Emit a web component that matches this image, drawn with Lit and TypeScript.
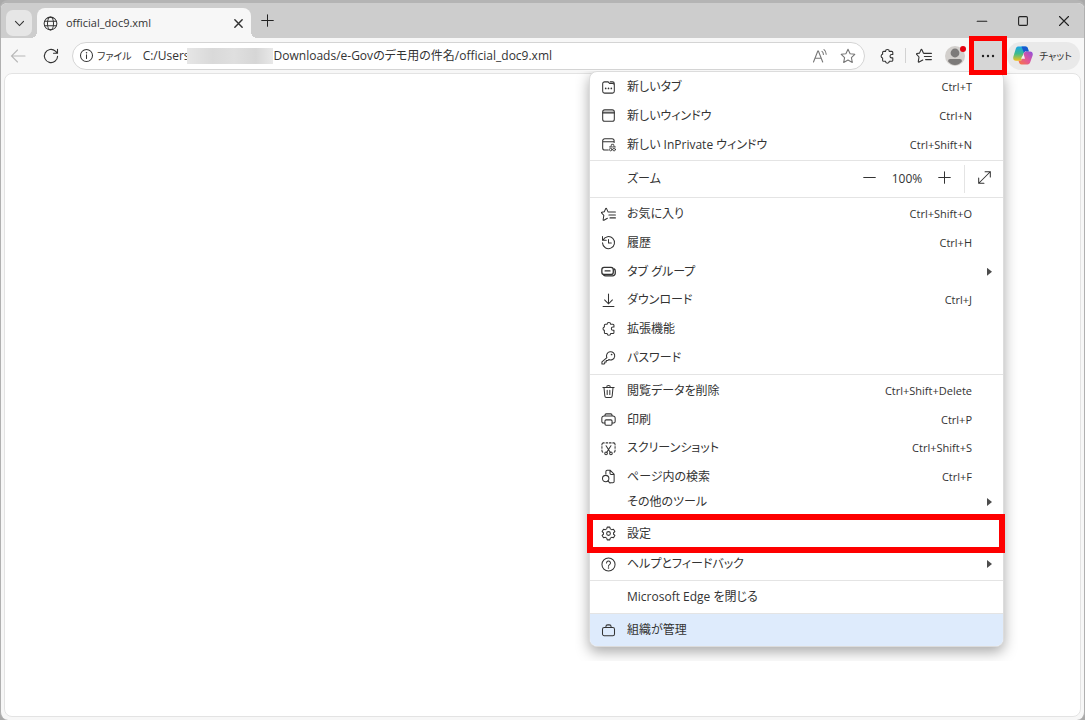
import { LitElement, html, css, svg, nothing, TemplateResult } from "lit";
import { customElement, property } from "lit/decorators.js";
import { classMap } from "lit/directives/class-map.js";

const ICONS: Record<string, TemplateResult> = {
  chevron: svg`<path d="M3 5.5 8 10.5 13 5.5" stroke-width="1.4"/>`,
  globe: svg`<circle cx="8" cy="8" r="6.8"/><ellipse cx="8" cy="8" rx="3.2" ry="6.8"/><path d="M1.8 5.6h12.4M1.8 10.4h12.4"/>`,
  close: svg`<path d="M3.5 3.5l9 9M12.5 3.5l-9 9"/>`,
  closetab: svg`<path d="M3.500 3.500l9 9M12.500 3.500l-9 9" stroke-width="1.800"/>`,
  plus: svg`<path d="M8 1.8v12.4M1.8 8h12.4"/>`,
  minus: svg`<path d="M1.8 8h12.4"/>`,
  min: svg`<path d="M3.2 8.2h9.6"/>`,
  max: svg`<rect x="3.6" y="3.6" width="8.8" height="8.8" rx="1.2"/>`,
  back: svg`<path d="M15 8H1.5M7.5 2 1.5 8l6 6"/>`,
  reload: svg`<path d="M14.6 8.2A6.6 6.6 0 1 1 12.4 3.1L14.3 5M14.5 1.2V5.2H10.5"/>`,
  info: svg`<circle cx="8" cy="8" r="6.4"/><path d="M8 7.2v4"/><circle cx="8" cy="5" r=".8" class="solid"/>`,
  aloud: svg`<path d="M1.5 14 5.8 3h.6l4.3 11M3.2 10.2h5.8M10 3.4c1 .8 1.4 1.8 1.4 3M12 1.6c1.6 1.2 2.2 2.8 2.2 4.6"/>`,
  star: svg`<path d="M8 1.3 10.1 5.7 14.8 6.3 11.4 9.6 12.3 14.4 8 12.1 3.7 14.4 4.6 9.6 1.2 6.3 5.9 5.7Z" stroke-linejoin="round"/>`,
  favorites: svg`<path d="M8.600 5.400 7.500 5.200 5.900 1.700a.5.5 0 0 0-.9 0L3.500 5.100.9 5.500a.5.5 0 0 0-.2.9L3 9 2.300 13.600a.5.5 0 0 0 .8.5L6.800 12M8.600 5.400h6.800M8.400 8.500h7M9.600 11.600h5.800" stroke-linejoin="round"/>`,
  puzzle: svg`<path d="M4.700 3.400H6.500a1.900 1.900 0 0 1 3.800 0h2.400a1.100 1.100 0 0 1 1.100 1.100v2h-1.100a1.700 1.700 0 0 0 0 3.400h1.100v2.300a1.100 1.100 0 0 1-1.100 1.100H10.300a1.900 1.900 0 0 1-3.800 0H4.700a1.100 1.100 0 0 1-1.100-1.100V10a1.900 1.900 0 0 1 0-3.700V4.500a1.100 1.100 0 0 1 1.100-1.100Z" stroke-linejoin="round"/>`,
  dots: svg`<g class="solid"><circle cx="3" cy="8" r="1.2"/><circle cx="8" cy="8" r="1.2"/><circle cx="13" cy="8" r="1.2"/></g>`,
  newtab: svg`<path d="M1.8 4a2 2 0 0 1 2-2h3.8l1.6 1.8h3a2 2 0 0 1 2 2V12a2 2 0 0 1-2 2H3.8a2 2 0 0 1-2-2ZM9.8 2h2.4a2 2 0 0 1 2 2v1.5"/><g class="solid"><circle cx="5" cy="9" r=".9"/><circle cx="8" cy="9" r=".9"/><circle cx="11" cy="9" r=".9"/></g>`,
  window: svg`<path d="M2 5V4a2 2 0 0 1 2-2h8a2 2 0 0 1 2 2v1Z" fill="#c4c4c4" stroke="none"/><rect x="1.8" y="1.800" width="12.4" height="12.4" rx="2.2"/><path d="M1.8 5.200h12.4"/>`,
  inprivate: svg`<path d="M7.800 13.800H4a2.200 2.200 0 0 1-2.200-2.200V4A2.200 2.200 0 0 1 4 1.800h7.800A2.200 2.200 0 0 1 14 4v1.800M1.800 5h12.200"/><path d="M9 10.600h6.400M10.600 10.200l.6-2.400h2.200l.6 2.400" stroke-width=".9"/><circle cx="10.400" cy="13.400" r="1.400" stroke-width=".9"/><circle cx="14" cy="13.400" r="1.400" stroke-width=".9"/>`,
  history: svg`<path d="M2.2 5.4A6.4 6.4 0 1 1 1.6 8.4M1.6 1.6v4h4M8 4.8v3.8h3"/>`,
  groups: svg`<rect x=".9" y="3.6" width="12.2" height="7.6" rx="2.4" stroke-width="1.400"/><path d="M4.4 7.4h5.2M14 5.2a2.6 2.6 0 0 1 1.2 2.2v2.4a2.8 2.8 0 0 1-2.8 2.8H5a3 3 0 0 1-2.2-.9" stroke-width="1.400"/>`,
  download: svg`<path d="M8 1v10.4M3.8 7.4 8 11.6l4.2-4.2M2.2 14.4h11.6"/>`,
  key: svg`<path d="M6.3 8.2a4.4 4.4 0 1 1 2 2L7.2 11.3H5.6v1.6H4v1.4l-.8.7H1v-2.4Z" stroke-linejoin="round"/><circle cx="11.3" cy="4.8" r=".9" class="solid"/>`,
  trash: svg`<path d="M2 3.8h12M6 3.6a2 2 0 0 1 4 0M3.2 4l.9 8.8a1.6 1.6 0 0 0 1.6 1.5h4.6a1.6 1.6 0 0 0 1.6-1.5L12.800 4M6.6 6.8v4.400M9.400 6.8v4.400"/>`,
  print: svg`<path d="M4.200 4.200V3.400A1.400 1.400 0 0 1 5.600 2h4.800a1.400 1.400 0 0 1 1.400 1.400v.8M4.200 11.800H2.600A1.700 1.700 0 0 1 .9 10.100V6.600a2.300 2.300 0 0 1 2.300-2.300h9.600a2.300 2.300 0 0 1 2.300 2.300v3.500a1.700 1.700 0 0 1-1.700 1.700H11.800"/><rect x="4.200" y="8.400" width="7.600" height="5.800" rx="1.300"/>`,
  shot: svg`<path d="M1 4.200V3.600A1.600 1.600 0 0 1 2.600 2h.8M5.400 2h1.800M9 2h1.800M12.600 2h.8A1.600 1.600 0 0 1 15 3.600v.6M15 6v1.800M15 9.600v.8a1.600 1.600 0 0 1-1 1.500M1 6v1.800M1 9.600v.8a1.600 1.600 0 0 0 1 1.500M5.400 5 10 12.200M10.600 5 6 12.200"/><circle cx="5.400" cy="13.200" r="1.400"/><circle cx="10.600" cy="13.200" r="1.400"/>`,
  find: svg`<path d="M5.200 5.200V2.800a1.400 1.400 0 0 1 1.400-1.400H9.800L14 5.600v7.600a1.400 1.400 0 0 1-1.400 1.400H10M9.600 1.600v3a1.200 1.200 0 0 0 1.200 1.200h3"/><circle cx="5" cy="10.200" r="3.400"/><path d="M7.400 12.600 9.600 15"/>`,
  gear: svg`<path d="M6.600 1.200h2.800l.5 1.900 1.500.8 1.900-.5 1.500 2.500-1.400 1.300v1.600l1.400 1.300-1.500 2.500-1.900-.5-1.500.8-.5 1.900H6.600l-.5-1.900-1.500-.8-1.900.5L1.200 10.100l1.400-1.300V7.200L1.200 5.900 2.700 3.400l1.900.5 1.500-.8Z" stroke-linejoin="round"/><circle cx="8" cy="8" r="2"/>`,
  help: svg`<circle cx="8" cy="8" r="7"/><path d="M5.900 6.300a2.100 2.100 0 1 1 3.200 1.800C8.300 8.600 8 9 8 9.800"/><circle cx="8" cy="11.800" r=".8" class="solid"/>`,
  bag: svg`<rect x="1.600" y="4.800" width="12.800" height="8.800" rx="1.800"/><path d="M5.200 4.600V4a2 2 0 0 1 2-2h1.600a2 2 0 0 1 2 2v.6"/>`,
  expand: svg`<path d="M2.400 13.600 13.600 2.400M8.600 1.800h5.600v5.600M1.800 8.600v5.600h5.600"/>`,
};

@customElement("ui-icon")
export class UiIcon extends LitElement {
  @property() name = "";
  @property({ type: Number }) size = 16;

  static styles = css`
    :host {
      display: inline-flex;
      flex: none;
    }
    svg {
      display: block;
      fill: none;
      stroke: currentColor;
      stroke-width: 1.1;
      stroke-linecap: round;
    }
    .solid {
      fill: currentColor;
      stroke: none;
    }
  `;

  render() {
    return html`<svg width=${this.size} height=${this.size} viewBox="0 0 16 16" aria-hidden="true">
      ${ICONS[this.name] ?? nothing}
    </svg>`;
  }
}

interface Item {
  label: string;
  icon?: string;
  keys?: string;
  sub?: boolean;
}

const WINDOWS: Item[] = [
  { label: "新しいタブ", icon: "newtab", keys: "Ctrl+T" },
  { label: "新しいウィンドウ", icon: "window", keys: "Ctrl+N" },
  { label: "新しい InPrivate ウィンドウ", icon: "inprivate", keys: "Ctrl+Shift+N" },
];

const LIBRARY: Item[] = [
  { label: "お気に入り", icon: "favorites", keys: "Ctrl+Shift+O" },
  { label: "履歴", icon: "history", keys: "Ctrl+H" },
  { label: "タブ グループ", icon: "groups", sub: true },
  { label: "ダウンロード", icon: "download", keys: "Ctrl+J" },
  { label: "拡張機能", icon: "puzzle" },
  { label: "パスワード", icon: "key" },
];

const TOOLS: Item[] = [
  { label: "閲覧データを削除", icon: "trash", keys: "Ctrl+Shift+Delete" },
  { label: "印刷", icon: "print", keys: "Ctrl+P" },
  { label: "スクリーンショット", icon: "shot", keys: "Ctrl+Shift+S" },
  { label: "ページ内の検索", icon: "find", keys: "Ctrl+F" },
];

@customElement("browser-menu")
export class BrowserMenu extends LitElement {
  static styles = css`
    :host {
      display: block;
      color: #333;
      background: #fff;
      border: 1px solid #dcdcdc;
      border-radius: 8px;
      box-sizing: border-box;
      box-shadow: 0 5px 14px rgba(0, 0, 0, 0.34);
      clip-path: inset(0 -14px -14px -14px);
    }
    button {
      font: inherit;
      font-feature-settings: inherit;
      color: inherit;
      background: none;
      border: 0;
      padding: 0;
      text-align: left;
    }
    .group {
      display: grid;
      grid-auto-rows: 1fr;
      padding: 1px 0;
      border-bottom: 1px solid #e4e4e4;
    }
    .windows {
      height: 86px;
    }
    .library {
      height: 172px;
      padding: 2px 0;
    }
    .tools {
      height: 114px;
      padding: 2px 0 0;
      border: 0;
    }
    .item {
      display: grid;
      grid-template-columns: 15px 1fr auto;
      column-gap: 11px;
      align-items: center;
      width: 100%;
      padding: 0 11px;
      white-space: nowrap;
    }
    .label {
      grid-column: 2;
    }
    .keys {
      margin-right: 20px;
      font-size: 11px;
    }
    .arrow {
      width: 5px;
      height: 8px;
      background: #4c4c4c;
      clip-path: polygon(0 0, 100% 50%, 0 100%);
    }
    .short {
      height: 22px;
    }
    .boxed {
      box-sizing: border-box;
      width: calc(100% + 5px);
      height: 39px;
      margin: 1px -2px 0 -3px;
      padding: 0 8px;
      border: 6px solid #fe0000;
    }
    .last {
      height: 32px;
    }
    .managed {
      height: 32px;
      background: #deebfc;
      border-radius: 0 0 7px 7px;
    }
    .rule {
      border-bottom: 1px solid #e4e4e4;
    }
    .help {
      padding-bottom: 5px;
    }
    .zoom {
      display: flex;
      align-items: center;
      height: 36px;
      padding: 0 11px 0 37px;
      border-bottom: 1px solid #e4e4e4;
    }
    .zoom .name {
      flex: 1;
    }
    .level {
      width: 60px;
      text-align: center;
    }
    .full {
      height: 28px;
      margin-left: 12px;
      padding-left: 12px;
      border-left: 1px solid #e4e4e4;
      display: flex;
      align-items: center;
    }
  `;

  private item(i: Item, extra = "") {
    return html`<button class=${classMap({ item: true, [extra || "plain"]: true })} role="menuitem">
      ${i.icon ? html`<ui-icon name=${i.icon} size="15"></ui-icon>` : nothing}
      <span class="label">${i.label}</span>
      ${i.keys ? html`<span class="keys">${i.keys}</span>` : nothing}
      ${i.sub ? html`<span class="arrow"></span>` : nothing}
    </button>`;
  }

  render() {
    return html`
      <div class="group windows">${WINDOWS.map((i) => this.item(i))}</div>
      <div class="zoom">
        <span class="name">ズーム</span>
        <button aria-label="縮小"><ui-icon name="minus" size="15"></ui-icon></button>
        <span class="level">100%</span>
        <button aria-label="拡大"><ui-icon name="plus" size="15"></ui-icon></button>
        <div class="full"><button aria-label="全画面表示"><ui-icon name="expand" size="15"></ui-icon></button></div>
      </div>
      <div class="group library">${LIBRARY.map((i) => this.item(i))}</div>
      <div class="group tools">${TOOLS.map((i) => this.item(i))}</div>
      ${this.item({ label: "その他のツール", sub: true }, "short")}
      ${this.item({ label: "設定", icon: "gear" }, "boxed")}
      <div class="rule help">${this.item({ label: "ヘルプとフィードバック", icon: "help", sub: true }, "short")}</div>
      <div class="rule">${this.item({ label: "Microsoft Edge を閉じる" }, "last")}</div>
      ${this.item({ label: "組織が管理", icon: "bag" }, "managed")}
    `;
  }
}

@customElement("app-root")
export class AppRoot extends LitElement {
  static styles = css`
    :host {
      display: block;
      height: 100vh;
      background: #a9a9a9;
      color: #333;
      font: 12px/16px "Open Sans", "Noto Sans CJK JP", sans-serif;
      font-feature-settings: "palt";
    }
    * {
      box-sizing: border-box;
    }
    button,
    input {
      font: inherit;
      font-feature-settings: inherit;
      color: inherit;
      background: none;
      border: 0;
      padding: 0;
    }
    button {
      display: inline-flex;
      align-items: center;
      justify-content: center;
    }
    .window {
      position: relative;
      display: flex;
      flex-direction: column;
      height: 100%;
      background: #f7f7f7;
      border: 1px solid #b0b0b0;
      border-top: 3px solid #b4b4b4;
      border-bottom: 0;
      border-radius: 8px;
      overflow: hidden;
    }
    .titlebar {
      display: flex;
      align-items: stretch;
      height: 35px;
      flex: none;
      background: #cdcdcd;
    }
    .tabs {
      width: 26px;
      height: 26px;
      margin: 7px 5px 0;
      border-radius: 7px;
      background: #e6e6e6;
    }
    .tab {
      position: relative;
      display: flex;
      align-items: center;
      gap: 8px;
      width: 214px;
      margin-top: 5px;
      padding: 0 6px;
      border-radius: 8px 8px 0 0;
      background: #f7f7f7;
      font-size: 11px;
    }
    .tab::before,
    .tab::after {
      content: "";
      position: absolute;
      bottom: 0;
      width: 6px;
      height: 6px;
    }
    .tab::before {
      right: 100%;
      background: radial-gradient(circle at 0 0, #cdcdcd 6px, #f7f7f7 6px);
    }
    .tab::after {
      left: 100%;
      background: radial-gradient(circle at 100% 0, #cdcdcd 6px, #f7f7f7 6px);
    }
    .title {
      flex: 1;
    }
    .add {
      margin-left: 8px;
      width: 16px;
      color: #222;
    }
    .controls {
      display: flex;
      align-items: center;
      gap: 25px;
      margin-left: auto;
      padding-right: 12px;
      color: #222;
    }
    .toolbar {
      display: flex;
      align-items: center;
      height: 35px;
      flex: none;
      padding: 0 4px 0 9px;
    }
    .back {
      color: #b8b8b8;
    }
    .reload {
      margin: 0 13px 0 17px;
    }
    .address {
      position: relative;
      display: flex;
      align-items: center;
      flex: 1;
      height: 28px;
      padding: 0 8px 0 6px;
      border: 1px solid #d4d4d4;
      border-radius: 14px;
      background: #fff;
    }
    .scheme {
      margin: 0 11px 0 3px;
      font-size: 10px;
    }
    .url {
      flex: 1;
      min-width: 0;
      outline: none;
    }
    .mask {
      position: absolute;
      left: 114px;
      top: 5px;
      width: 86px;
      height: 16px;
      background: linear-gradient(90deg, #e6e6e6, #d9d9d9 30%, #dfdfdf 55%, #d6d6d6 80%, #e8e8e8);
    }
    .pale {
      color: #777;
    }
    .fav {
      margin-left: 12px;
    }
    .ext {
      margin-left: 14px;
    }
    .sep {
      width: 1px;
      height: 15px;
      margin: 0 10px;
      background: #d2d2d2;
    }
    .avatar {
      position: relative;
      margin-left: 13px;
    }
    .dot {
      position: absolute;
      right: -1px;
      top: 0;
      width: 6px;
      height: 6px;
      border-radius: 50%;
      background: #e3000f;
    }
    .more {
      position: relative;
      width: 38px;
      height: 39px;
      margin-left: 4px;
      border: 5px solid #fe0000;
      background: #d6d6d6;
      color: #222;
      z-index: 2;
    }
    .chat {
      height: 28px;
      gap: 6px;
      padding: 0 8px 0 6px;
      border-radius: 14px;
      background: #e9e9e9;
      font-size: 10px;
    }
    .page {
      flex: 1;
      margin: 0 3px 3px;
      border: 1px solid #e3e3e3;
      border-radius: 8px;
      background: #fff;
    }
    browser-menu {
      position: absolute;
      top: 68px;
      right: 80px;
      width: 415px;
      z-index: 1;
    }
  `;

  render() {
    return html`
      <div class="window">
        <header class="titlebar">
          <button class="tabs" aria-label="タブ操作"><ui-icon name="chevron" size="13"></ui-icon></button>
          <div class="tab">
            <ui-icon name="globe" size="15"></ui-icon>
            <span class="title">official_doc9.xml</span>
            <button aria-label="タブを閉じる"><ui-icon name="closetab" size="13"></ui-icon></button>
          </div>
          <button class="add" aria-label="新しいタブ"><ui-icon name="plus" size="15"></ui-icon></button>
          <div class="controls">
            <button aria-label="最小化"><ui-icon name="min"></ui-icon></button>
            <button aria-label="最大化"><ui-icon name="max"></ui-icon></button>
            <button aria-label="閉じる"><ui-icon name="close"></ui-icon></button>
          </div>
        </header>
        <nav class="toolbar">
          <button class="back" aria-label="戻る"><ui-icon name="back"></ui-icon></button>
          <button class="reload" aria-label="更新"><ui-icon name="reload"></ui-icon></button>
          <div class="address">
            <ui-icon name="info" size="15"></ui-icon>
            <label class="scheme" for="url">ファイル</label>
            <input
              id="url"
              class="url"
              .value=${"C:/Users" + "\u2003".repeat(7) + "Downloads/e-Govのデモ用の件名/official_doc9.xml"}
            />
            <span class="mask"></span>
            <button class="pale" aria-label="音声で読み上げる"><ui-icon name="aloud"></ui-icon></button>
            <button class="pale fav" aria-label="お気に入りに追加"><ui-icon name="star"></ui-icon></button>
          </div>
          <button class="ext" aria-label="拡張機能"><ui-icon name="puzzle"></ui-icon></button>
          <span class="sep"></span>
          <button aria-label="お気に入り"><ui-icon name="favorites"></ui-icon></button>
          <button class="avatar" aria-label="プロファイル">
            <svg width="20" height="20" viewBox="0 0 20 20" aria-hidden="true">
              <circle cx="10" cy="10" r="10" fill="#d2cfcc" />
              <circle cx="10" cy="7" r="4.400" fill="#7c7a79" />
              <path d="M3 15.200a2.200 2.200 0 0 1 2.200-2.200h9.600a2.200 2.200 0 0 1 2.200 2.200A9 9 0 0 1 10 19a9 9 0 0 1-7-3.800Z" fill="#7c7a79" />
            </svg>
            <span class="dot"></span>
          </button>
          <button class="more" aria-label="設定など"><ui-icon name="dots"></ui-icon></button>
          <button class="chat">
            <svg width="20" height="19" viewBox="0 0 20 19" aria-hidden="true">
              <defs>
                <linearGradient id="a" x1="0" y1="0" x2="0" y2="1">
                  <stop offset="0" stop-color="#1aa5e8" />
                  <stop offset=".5" stop-color="#3fbb8b" />
                  <stop offset="1" stop-color="#f3c21c" />
                </linearGradient>
                <linearGradient id="b" x1="1" y1="0" x2="0" y2="1">
                  <stop offset="0" stop-color="#8a4fe0" />
                  <stop offset=".5" stop-color="#e0569b" />
                  <stop offset="1" stop-color="#fa7a3d" />
                </linearGradient>
              </defs>
              <path d="M5.500.5h7c1.300 0 2 .8 2.400 2l.9 2.900h-2.600c-1.300 0-2 .6-2.400 1.900L9 12.900c-.4 1.200-1 1.900-2.300 1.900H3C.6 14.800-.2 13 .4 10.600L2.700 3C3.200 1.400 4 .5 5.500.5Z" fill="url(#a)" />
              <path d="M8.500.5h4c1.300 0 2 .8 2.400 2l.9 2.900h-2.600c-1.300 0-2 .4-2.300 1.300Z" fill="#1758cf" />
              <path d="M9.400 11.500 10.800 7.300c.4-1.300 1.100-1.900 2.400-1.900" fill="#fff" />
              <path d="M14.500 18.500h-6c-1.300 0-2-.8-2.400-2l-.6-1.700h1.200c1.300 0 1.900-.7 2.300-1.900l1.800-5.600c.4-1.300 1.100-1.900 2.400-1.900H17c2.400 0 3.200 1.800 2.600 4.200L17.300 16c-.5 1.600-1.300 2.500-2.800 2.500Z" fill="url(#b)" />
              <path d="M10.600 8 12 12.800h-2.600L8 12.800Z" fill="#f4f1f2" />
            </svg>
            <span>チャット</span>
          </button>
        </nav>
        <main class="page"></main>
        <browser-menu role="menu"></browser-menu>
      </div>
    `;
  }
}
